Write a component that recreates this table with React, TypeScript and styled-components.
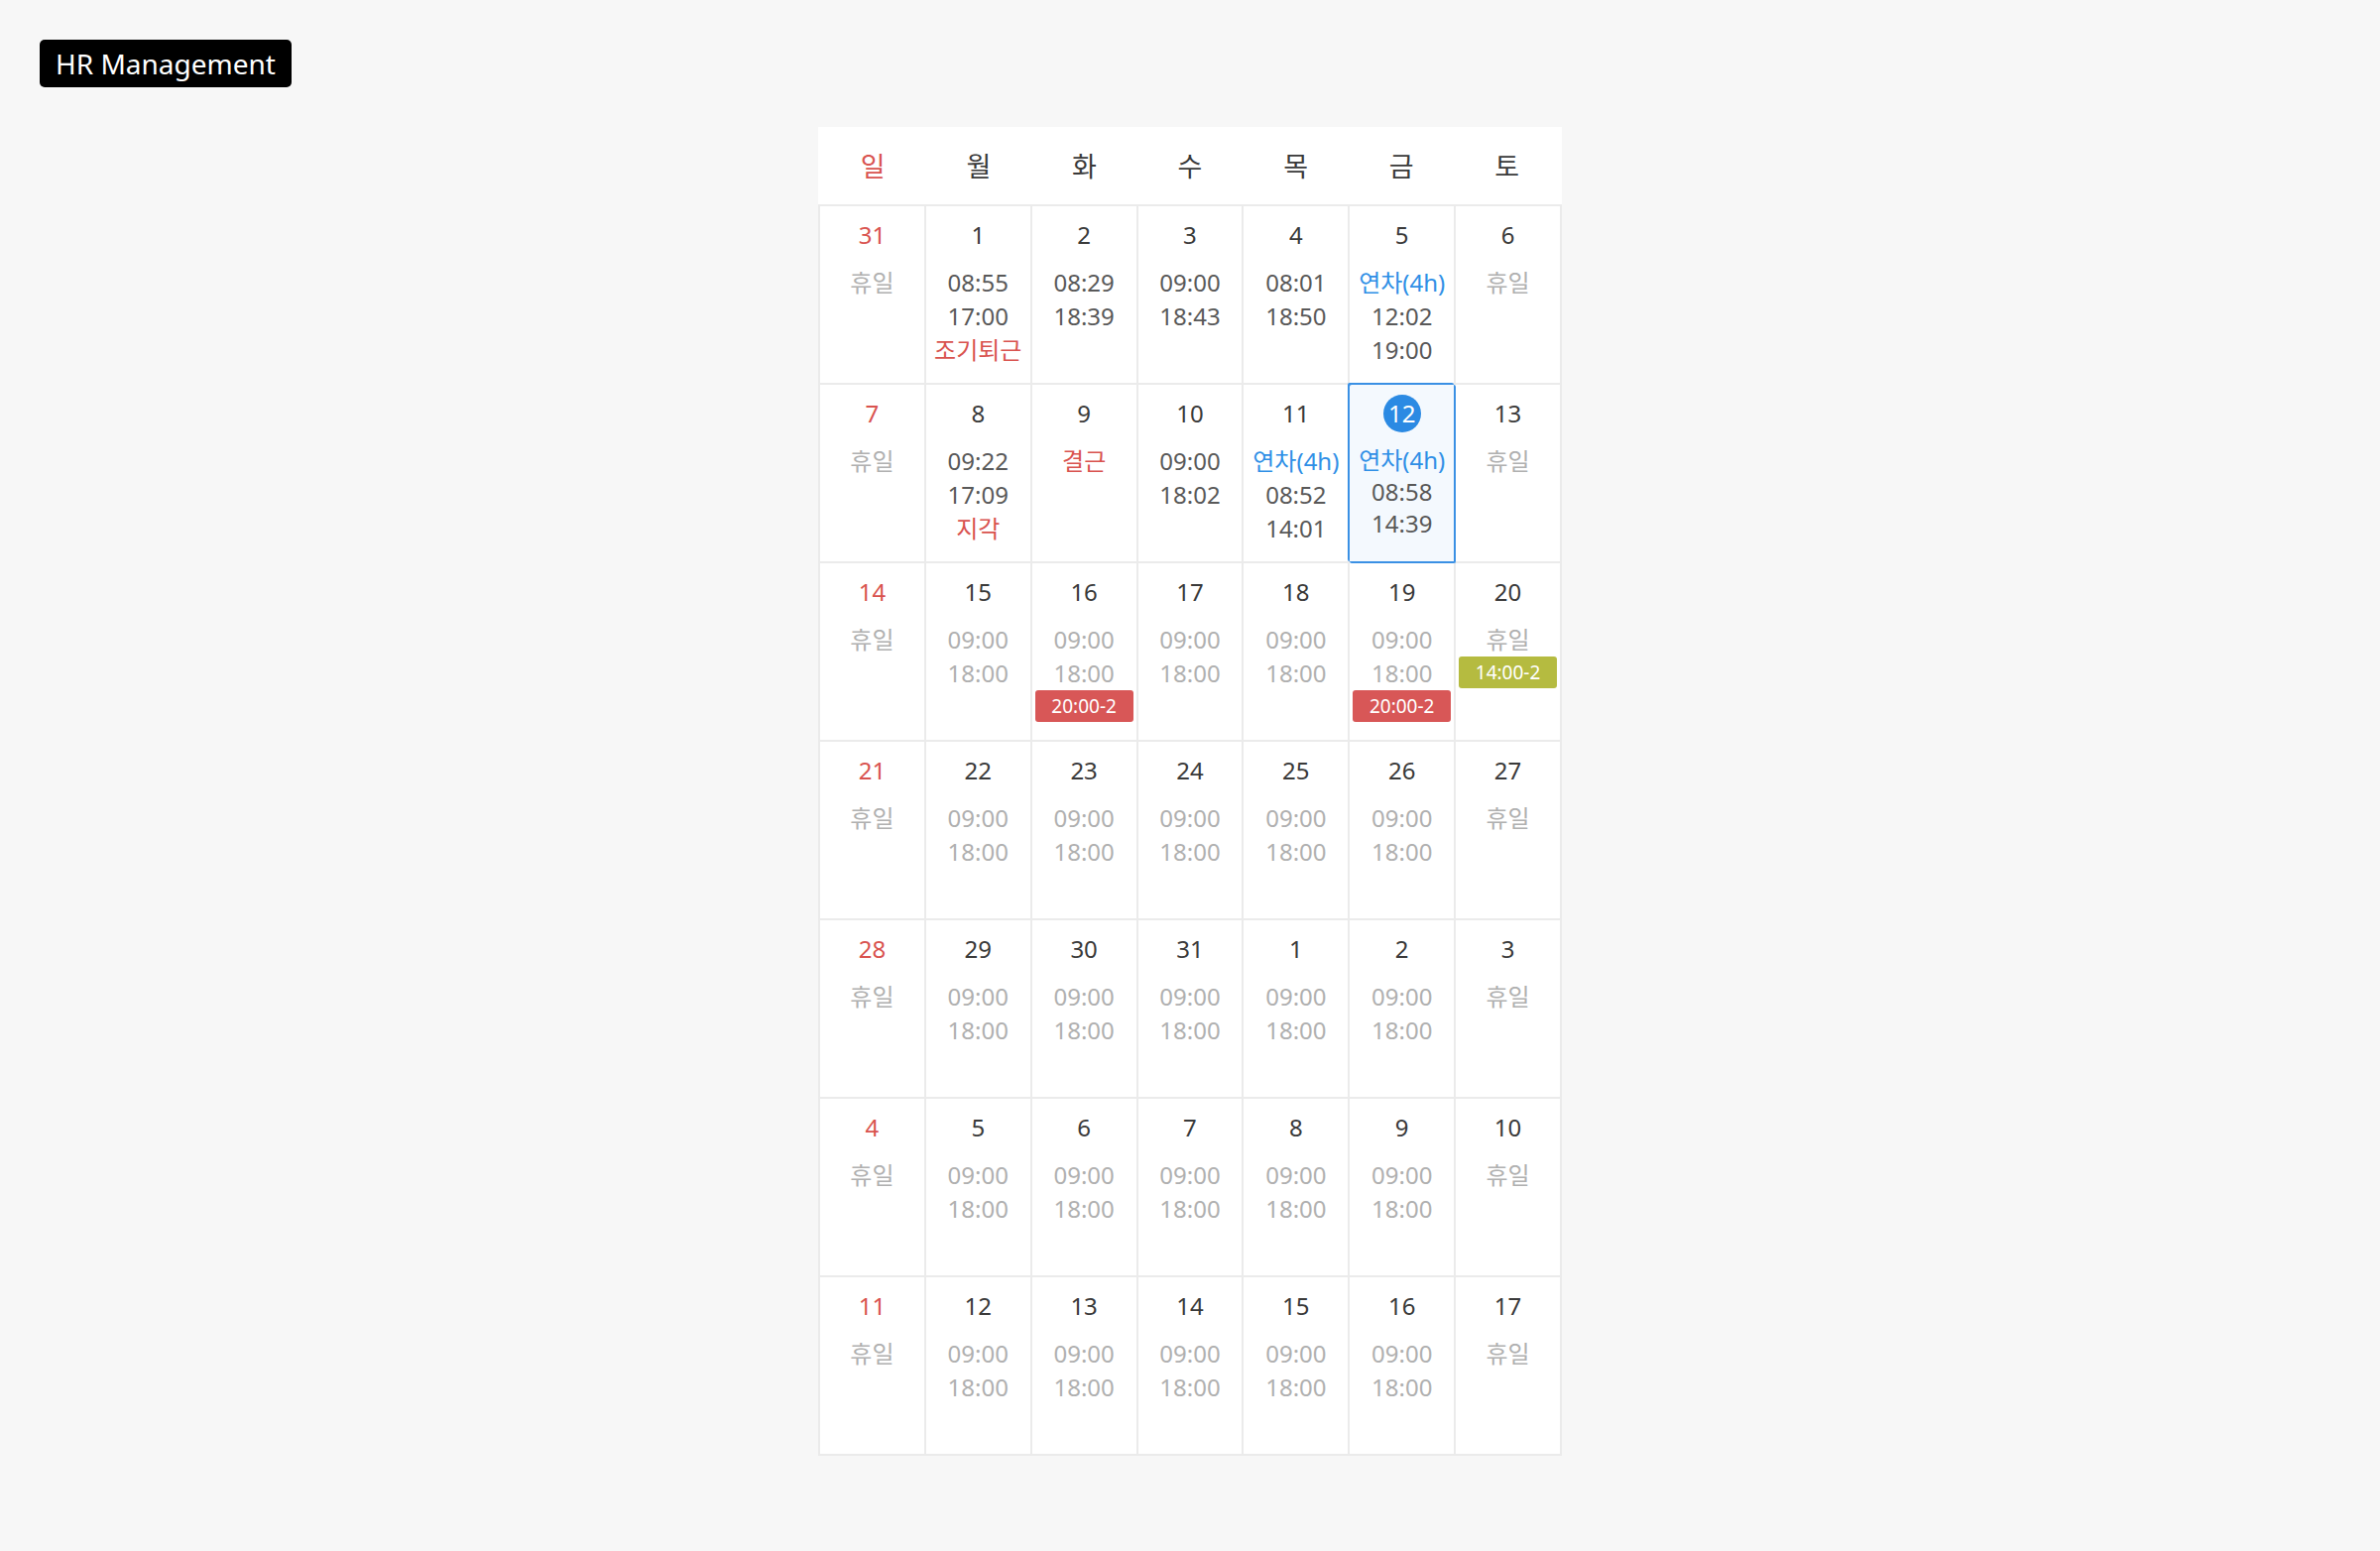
import React from 'react';
import styled, { createGlobalStyle } from 'styled-components';

type Tone = 'dark' | 'muted' | 'red' | 'blue' | 'off';

type Line = { text: string; tone: Tone };

type Day = {
  date: number;
  sunday?: boolean;
  today?: boolean;
  lines: Line[];
  badge?: { text: string; color: 'red' | 'olive' };
};

const WEEKDAYS = ['일', '월', '화', '수', '목', '금', '토'];

const COLORS: Record<Tone, string> = {
  dark: '#595959',
  muted: '#b0b0b0',
  red: '#d9534f',
  blue: '#2f8fe6',
  off: '#b0b0b0',
};

const off = (): Line[] => [{ text: '휴일', tone: 'off' }];
const planned = (): Line[] => [
  { text: '09:00', tone: 'muted' },
  { text: '18:00', tone: 'muted' },
];
const worked = (...texts: string[]): Line[] =>
  texts.map((text) => ({ text, tone: 'dark' as Tone }));

// weeks after the 3rd are all schedule-only
const plainWeek = (dates: number[]): Day[] =>
  dates.map((d, i) => ({
    date: d,
    sunday: i === 0,
    lines: i === 0 || i === 6 ? off() : planned(),
  }));

const weeks: Day[][] = [
  [
    { date: 31, sunday: true, lines: off() },
    { date: 1, lines: [...worked('08:55', '17:00'), { text: '조기퇴근', tone: 'red' }] },
    { date: 2, lines: worked('08:29', '18:39') },
    { date: 3, lines: worked('09:00', '18:43') },
    { date: 4, lines: worked('08:01', '18:50') },
    { date: 5, lines: [{ text: '연차(4h)', tone: 'blue' }, ...worked('12:02', '19:00')] },
    { date: 6, lines: off() },
  ],
  [
    { date: 7, sunday: true, lines: off() },
    { date: 8, lines: [...worked('09:22', '17:09'), { text: '지각', tone: 'red' }] },
    { date: 9, lines: [{ text: '결근', tone: 'red' }] },
    { date: 10, lines: worked('09:00', '18:02') },
    { date: 11, lines: [{ text: '연차(4h)', tone: 'blue' }, ...worked('08:52', '14:01')] },
    { date: 12, today: true, lines: [{ text: '연차(4h)', tone: 'blue' }, ...worked('08:58', '14:39')] },
    { date: 13, lines: off() },
  ],
  [
    { date: 14, sunday: true, lines: off() },
    { date: 15, lines: planned() },
    { date: 16, lines: planned(), badge: { text: '20:00-2', color: 'red' } },
    { date: 17, lines: planned() },
    { date: 18, lines: planned() },
    { date: 19, lines: planned(), badge: { text: '20:00-2', color: 'red' } },
    { date: 20, lines: off(), badge: { text: '14:00-2', color: 'olive' } },
  ],
  plainWeek([21, 22, 23, 24, 25, 26, 27]),
  plainWeek([28, 29, 30, 31, 1, 2, 3]),
  plainWeek([4, 5, 6, 7, 8, 9, 10]),
  plainWeek([11, 12, 13, 14, 15, 16, 17]),
];

function App() {
  return (
    <>
      <GlobalStyle />
      <Page>
        <Brand>HR Management</Brand>
        <Calendar>
          <WeekHeader>
            {WEEKDAYS.map((w, i) => (
              <WeekLabel key={w} $sunday={i === 0}>
                {w}
              </WeekLabel>
            ))}
          </WeekHeader>
          <Grid>
            {weeks.flat().map((day, idx) => (
              <Cell key={idx} $today={!!day.today}>
                <DateNum $sunday={!!day.sunday} $today={!!day.today}>
                  {day.date}
                </DateNum>
                <Lines $tight={!!day.today}>
                  {day.lines.map((l, j) => (
                    <Entry key={j} $tone={l.tone}>
                      {l.text}
                    </Entry>
                  ))}
                </Lines>
                {day.badge && <Badge $color={day.badge.color}>{day.badge.text}</Badge>}
              </Cell>
            ))}
          </Grid>
        </Calendar>
      </Page>
    </>
  );
}

const GlobalStyle = createGlobalStyle`
  html, body {
    margin: 0;
    padding: 0;
    background: #f7f7f7;
  }
  body {
    font-family: "Noto Sans", "Noto Sans CJK KR", sans-serif;
    color: #333;
  }
`;

const Page = styled.div`
  min-height: 1564px;
  padding: 40px;
  box-sizing: border-box;
  display: flex;
  flex-direction: column;
`;

const Brand = styled.div`
  align-self: flex-start;
  height: 48px;
  padding: 0 16px;
  display: flex;
  align-items: center;
  background: #000;
  color: #fff;
  font-size: 28px;
  border-radius: 5px;
`;

const Calendar = styled.div`
  width: 750px;
  margin: 40px auto 0;
  background: #fff;
`;

const WeekHeader = styled.div`
  display: grid;
  grid-template-columns: repeat(7, 1fr);
  height: 78px;
  padding: 0 2px;
`;

const WeekLabel = styled.div<{ $sunday: boolean }>`
  display: flex;
  align-items: center;
  justify-content: center;
  padding-bottom: 2px;
  font-size: 27px;
  font-family: "Noto Sans CJK KR", "Noto Sans", sans-serif;
  color: ${(p) => (p.$sunday ? '#d9534f' : '#3a3a3a')};
`;

const Grid = styled.div`
  display: grid;
  grid-template-columns: repeat(7, 1fr);
  grid-auto-rows: 180px;
  border-top: 2px solid #ebebeb;
  border-left: 2px solid #ebebeb;
`;

const Cell = styled.div<{ $today: boolean }>`
  display: flex;
  flex-direction: column;
  align-items: center;
  padding: 10px 3px 0;
  border-right: 2px solid ${(p) => (p.$today ? '#3a90e4' : '#ebebeb')};
  border-bottom: 2px solid ${(p) => (p.$today ? '#3a90e4' : '#ebebeb')};
  background: ${(p) => (p.$today ? '#f4f9fe' : '#fff')};
  box-shadow: ${(p) => (p.$today ? '-2px -2px 0 0 #3a90e4' : 'none')};
  border-radius: ${(p) => (p.$today ? '2px' : '0')};
  min-width: 0;
`;

const DateNum = styled.div<{ $sunday: boolean; $today: boolean }>`
  width: 38px;
  height: 38px;
  line-height: 38px;
  text-align: center;
  border-radius: 50%;
  font-size: 24px;
  background: ${(p) => (p.$today ? '#2b8ae3' : 'transparent')};
  color: ${(p) => (p.$today ? '#fff' : p.$sunday ? '#d9534f' : '#3a3a3a')};
`;

const Lines = styled.div<{ $tight: boolean }>`
  margin-top: 12px;
  display: flex;
  flex-direction: column;
  align-items: center;
  line-height: ${(p) => (p.$tight ? '32px' : '34px')};
`;

const Entry = styled.div<{ $tone: Tone }>`
  font-size: 24px;
  white-space: nowrap;
  color: ${(p) => COLORS[p.$tone]};
`;

const Badge = styled.div<{ $color: 'red' | 'olive' }>`
  align-self: stretch;
  height: 32px;
  display: flex;
  align-items: center;
  justify-content: center;
  border-radius: 3px;
  font-size: 19px;
  color: #fff;
  background: ${(p) => (p.$color === 'red' ? '#d85757' : '#b5bb40')};
`;

export default App;
